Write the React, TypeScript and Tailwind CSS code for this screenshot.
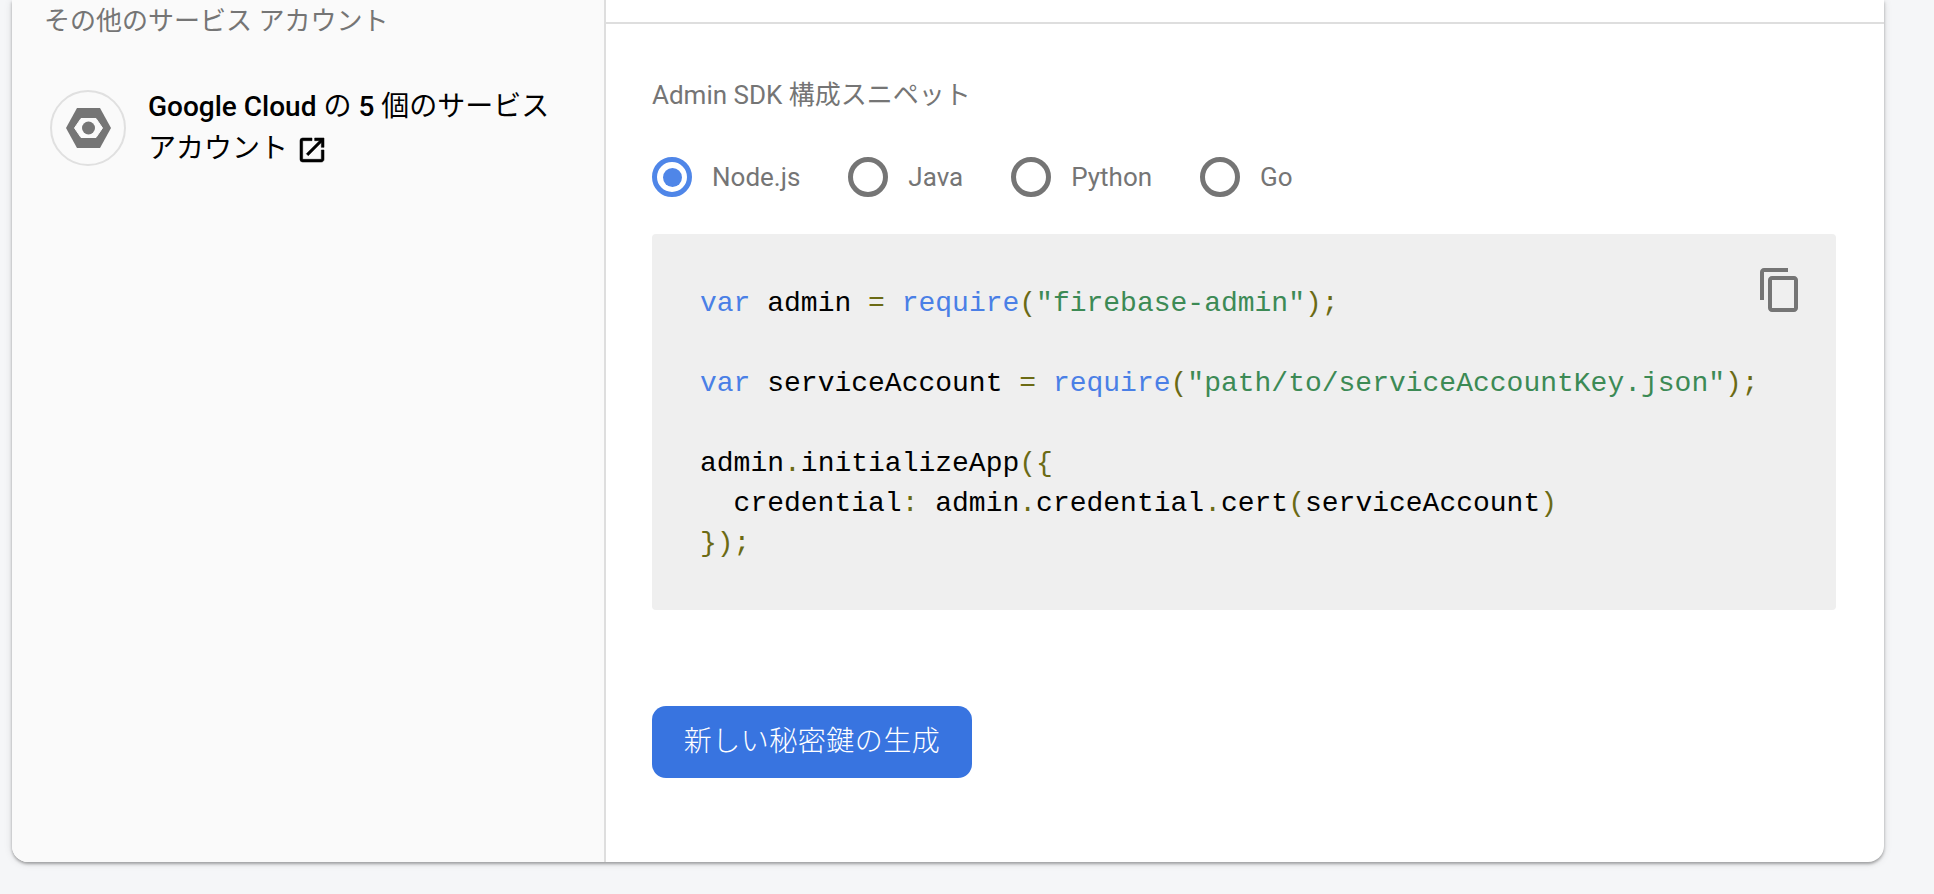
import { MdContentCopy } from 'react-icons/md';

const Kw = ({ children }: { children: string }) => <span className="text-[#4a7fe6]">{children}</span>;
const Str = ({ children }: { children: string }) => <span className="text-[#3c8a55]">{children}</span>;
const Pn = ({ children }: { children: string }) => <span className="text-[#6b6a14]">{children}</span>;

const Radio = ({ label, checked }: { label: string; checked?: boolean }) => (
  <label className="flex items-center gap-[20px]">
    <span
      className={`flex h-[40px] w-[40px] items-center justify-center rounded-full border-[5px] ${
        checked ? 'border-[#4f86e8]' : 'border-[#757575]'
      }`}
    >
      {checked && <span className="h-[19px] w-[19px] rounded-full bg-[#4f86e8]" />}
    </span>
    <span className="text-[26px] text-[#757575]">{label}</span>
  </label>
);

export default function App() {
  return (
    <div className="h-[894px] overflow-hidden bg-[#f5f6f8] pl-[12px] font-['Roboto','Noto_Sans_CJK_JP',sans-serif]">
      {/* Card */}
      <div className="flex h-[862px] w-[1872px] overflow-hidden rounded-b-[16px] bg-white shadow-[0_2px_3px_rgba(0,0,0,0.3),0_1px_8px_rgba(0,0,0,0.12)]">
        {/* Sidebar */}
        <div className="w-[594px] shrink-0 border-r-2 border-[#dedede] bg-[#fafafa] pl-[32px] pr-[40px]">
          <div className="h-[40px] text-[26px] leading-[42px] text-[#757575]">その他のサービス アカウント</div>
          <div className="mt-[50px] flex gap-[22px] pl-[6px]">
            <div className="flex h-[76px] w-[76px] shrink-0 items-center justify-center rounded-full border-2 border-[#e0e0e0] bg-[#fafafa]">
              <svg width="45" height="40" viewBox="0 0 45 40">
                <polygon points="11,0 34,0 45,20 34,40 11,40 0,20" fill="#757575" />
                <polygon points="15,10.5 30,10.5 36.5,20 30,29.5 15,29.5 8.5,20" fill="#fafafa" stroke="#fafafa" strokeLinejoin="round" />
                <circle cx="22.5" cy="20" r="6.5" fill="#757575" />
              </svg>
            </div>
            <div className="-mt-[4px] text-[28px] leading-[42px] text-black">
              <span className="font-medium">Google Cloud</span> の <span className="font-medium">5</span> 個のサービス
              アカウント
              <svg viewBox="0 0 24 24" fill="currentColor" stroke="currentColor" strokeWidth="0.4" className="ml-[8px] inline-block h-[32px] w-[32px] align-[-8px]">
                <path d="M19 19H5V5h7V3H5a2 2 0 0 0-2 2v14a2 2 0 0 0 2 2h14c1.1 0 2-.9 2-2v-7h-2v7zM14 3v2h3.59l-9.83 9.83 1.41 1.41L19 6.41V10h2V3h-7z" />
              </svg>
            </div>
          </div>
        </div>

        {/* Main */}
        <div className="min-w-0 flex-1">
          <div className="h-[24px] border-b-2 border-[#dedede]" />
          <div className="pl-[46px] pr-[48px]">
            <div className="mt-[53px] text-[26px] leading-[36px] text-[#757575]">Admin SDK 構成スニペット</div>
            <div className="mt-[44px] flex gap-[48px]">
              <Radio label="Node.js" checked />
              <Radio label="Java" />
              <Radio label="Python" />
              <Radio label="Go" />
            </div>
            <div className="relative mt-[37px] h-[376px] rounded-[4px] bg-[#efefef] pl-[48px] pr-[49px] pt-[50px]">
              <pre className="font-['Liberation_Mono',monospace] text-[28px] leading-[40px] text-black">
                <code className="font-['Liberation_Mono',monospace]">
                  <Kw>var</Kw> admin <Pn>=</Pn> <Kw>require</Kw>
                  <Pn>(</Pn>
                  <Str>"firebase-admin"</Str>
                  <Pn>);</Pn>
                  {'\n\n'}
                  <Kw>var</Kw> serviceAccount <Pn>=</Pn> <Kw>require</Kw>
                  <Pn>(</Pn>
                  <Str>"path/to/serviceAccountKey.json"</Str>
                  <Pn>);</Pn>
                  {'\n\n'}admin<Pn>.</Pn>initializeApp<Pn>{'({'}</Pn>
                  {'\n  '}credential<Pn>:</Pn> admin<Pn>.</Pn>credential<Pn>.</Pn>cert<Pn>(</Pn>serviceAccount<Pn>)</Pn>
                  {'\n'}
                  <Pn>{'});'}</Pn>
                </code>
              </pre>
              <MdContentCopy className="absolute right-[32px] top-[32px] text-[48px] text-[#757575]" />
            </div>
            <button className="mt-[96px] h-[72px] w-[320px] rounded-[14px] bg-[#3874e0] text-[28px] font-light tracking-[0.5px] text-white">
              新しい秘密鍵の生成
            </button>
          </div>
        </div>
      </div>
    </div>
  );
}
